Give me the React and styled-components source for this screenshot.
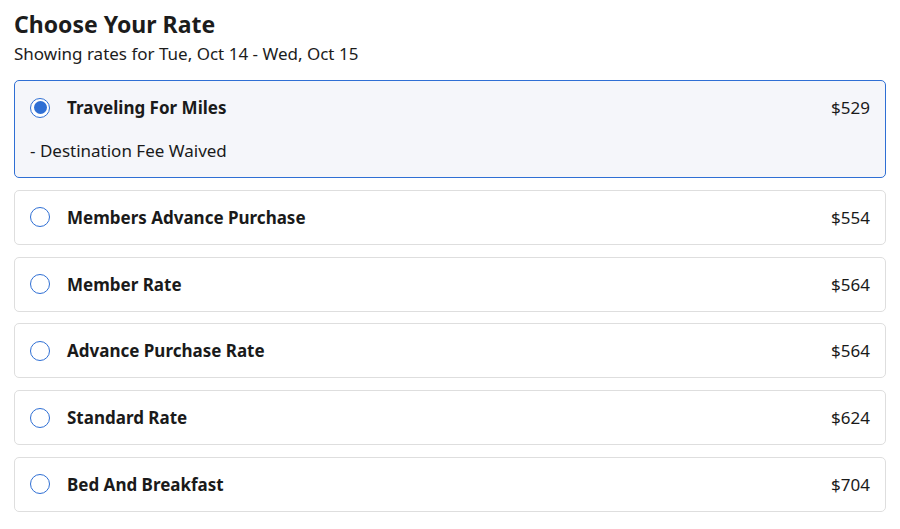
import styled, { createGlobalStyle } from 'styled-components'

const GlobalStyle = createGlobalStyle`
  body {
    margin: 0;
    background: #ffffff;
    font-family: "Noto Sans", "Open Sans", sans-serif;
    color: #1a1a1a;
  }
`;

const Page = styled.div`
  padding: 9px 14px 0;
`;

const Title = styled.h2`
  margin: 0;
  font-size: 23px;
  line-height: 30px;
  font-weight: 700;
  color: #1c1c1c;
`;

const Subtitle = styled.p`
  margin: 2.5px 0 0;
  font-size: 17px;
  line-height: 23px;
  color: #1c1c1c;
`;

const RateList = styled.div`
  margin-top: 15.5px;
  display: flex;
  flex-direction: column;
  gap: 11.8px;
`;

const RateCard = styled.label`
  display: flex;
  flex-direction: column;
  gap: 20px;
  padding: 15px;
  border: 1px solid ${props => props.selected ? '#2f6fd4' : '#dedede'};
  background: ${props => props.selected ? '#f5f6fa' : '#ffffff'};
  border-radius: 5px;
  cursor: pointer;
`;

const Row = styled.div`
  display: flex;
  align-items: center;
  line-height: 23px;
  font-size: 17px;
`;

const Radio = styled.span`
  width: 20px;
  height: 20px;
  box-sizing: border-box;
  border-radius: 50%;
  border: 1.5px solid #2f6fd4;
  margin-right: 17px;
  flex-shrink: 0;
  position: relative;
  background: #ffffff;
  &::after {
    content: '';
    display: ${props => props.checked ? 'block' : 'none'};
    position: absolute;
    inset: 2.5px;
    border-radius: 50%;
    background: #2f6fd4;
  }
`;

const Name = styled.span`
  font-weight: 700;
  flex: 1;
  color: #1a1a1a;
`;

const Price = styled.span`
  color: #1a1a1a;
`;

const Perk = styled.div`
  font-size: 17px;
  line-height: 23px;
  color: #1a1a1a;
`;

const rates = [
  { name: 'Traveling For Miles', price: 529, perks: ['- Destination Fee Waived'] },
  { name: 'Members Advance Purchase', price: 554 },
  { name: 'Member Rate', price: 564 },
  { name: 'Advance Purchase Rate', price: 564 },
  { name: 'Standard Rate', price: 624 },
  { name: 'Bed And Breakfast', price: 704 },
];

export default function App() {
  const selected = 0;
  return (
    <Page>
      <GlobalStyle />
      <Title>Choose Your Rate</Title>
      <Subtitle>Showing rates for Tue, Oct 14 - Wed, Oct 15</Subtitle>
      <RateList>
        {rates.map((rate, i) => (
          <RateCard key={rate.name} selected={i === selected}>
            <Row>
              <Radio checked={i === selected} />
              <Name>{rate.name}</Name>
              <Price>${rate.price}</Price>
            </Row>
            {i === selected && rate.perks && rate.perks.map(p => (
              <Perk key={p}>{p}</Perk>
            ))}
          </RateCard>
        ))}
      </RateList>
    </Page>
  )
}
